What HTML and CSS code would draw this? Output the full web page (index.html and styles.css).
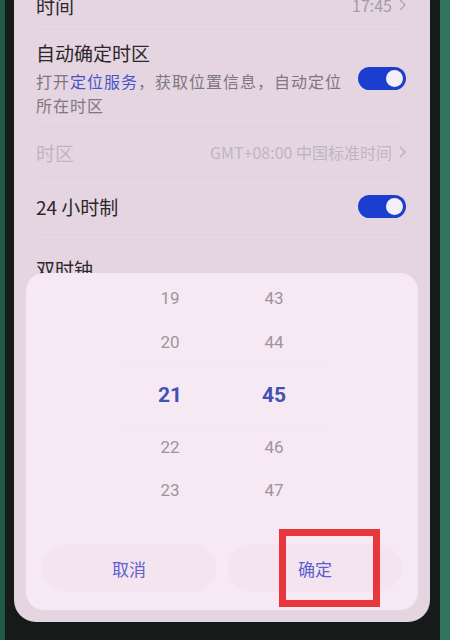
FILE: index.html
```html
<!DOCTYPE html>
<html lang="zh-CN">
<head>
  <meta charset="UTF-8">
  <meta name="viewport" content="width=device-width, initial-scale=1.0">
  <title>日期和时间</title>
  <link rel="stylesheet" href="styles.css">
</head>
<body>
  <div class="bezel">
    <div class="screen">
      <div class="settings">
        <div class="row row-first">
          <span class="label">时间</span>
          <span class="value">17:45
            <svg class="chevron" viewBox="0 0 8 14"><path d="M1 1l6 6-6 6"/></svg>
          </span>
        </div>

        <div class="row row-tall">
          <div class="text">
            <div class="label">自动确定时区</div>
            <div class="hint">打开<span class="link">定位服务</span>，获取位置信息，自动定位所在时区</div>
          </div>
          <span class="switch on"></span>
        </div>

        <div class="row disabled">
          <span class="label">时区</span>
          <span class="value">GMT+08:00 中国标准时间
            <svg class="chevron" viewBox="0 0 8 14"><path d="M1 1l6 6-6 6"/></svg>
          </span>
        </div>

        <div class="row row-mid">
          <span class="label">24 小时制</span>
          <span class="switch on"></span>
        </div>

        <div class="row row-last">
          <span class="label">双时钟</span>
        </div>
      </div>

      <!-- Time picker dialog -->
      <div class="dialog">
        <div class="picker">
          <div class="wheel">
            <div class="item">19</div>
            <div class="item">20</div>
            <div class="item selected">21</div>
            <div class="item short">22</div>
            <div class="item">23</div>
          </div>
          <div class="wheel">
            <div class="item">43</div>
            <div class="item">44</div>
            <div class="item selected">45</div>
            <div class="item short">46</div>
            <div class="item">47</div>
          </div>
        </div>
        <div class="dialog-actions">
          <button class="action">取消</button>
          <button class="action">确定</button>
        </div>
      </div>
    </div>
  </div>

  <div class="highlight"></div>
</body>
</html>
```

FILE: styles.css
```css
/* Base */
body {
  margin: 0;
  height: 640px;
  overflow: hidden;
  background: linear-gradient(90deg, #1f5a47 0%, #2f7560 100%);
  font-family: "Noto Sans CJK SC", "Noto Sans", sans-serif;
  position: relative;
}

.bezel {
  margin-left: 5px;
  width: 416px;
  height: 640px;
  padding: 0 10px 0 9px;
  background: #161a19;
}

.screen {
  position: relative;
  height: 622px;
  background: #e5d5e1;
  border-radius: 0 0 22px 22px;
  overflow: hidden;
}

/* Settings list */
.settings {
  padding: 0 24px 0 22px;
}

.row {
  display: flex;
  justify-content: space-between;
  align-items: center;
  height: 50px;
  border-bottom: 1px solid #e0d0dc;
}

.row-first {
  height: 48px;
  margin-top: -19px;
}

.row-tall {
  height: 96px;
}

.row-mid {
  height: 56px;
}

.row-last {
  height: 66px;
  border-bottom: none;
}

.label {
  font-size: 19px;
  color: #2c272b;
}

.value {
  display: flex;
  align-items: center;
  gap: 7px;
  font-size: 16px;
  color: #a49ca3;
}

.chevron {
  width: 7px;
  height: 12px;
  fill: none;
  stroke: #aaa2a9;
  stroke-width: 1.4;
}

.text .label {
  line-height: 26px;
}

.hint {
  width: 312px;
  margin-top: 3px;
  font-size: 16px;
  letter-spacing: 1px;
  line-height: 24px;
  color: #7e777d;
}

.link {
  color: #4555c8;
}

.disabled .label,
.disabled .value {
  color: #c0b5be;
}

.disabled .chevron {
  stroke: #b4aab3;
}

.switch {
  position: relative;
  width: 48px;
  height: 23px;
  border-radius: 12px;
  background: #1a3fcf;
  flex-shrink: 0;
}

.switch.on::after {
  content: "";
  position: absolute;
  right: 3px;
  top: 3px;
  width: 17px;
  height: 17px;
  border-radius: 50%;
  background: #f4eef6;
}

/* Picker dialog */
.dialog {
  position: absolute;
  left: 12px;
  top: 273px;
  width: 392px;
  height: 337px;
  border-radius: 18px;
  background: #f7e9f4;
}

.picker {
  display: flex;
  justify-content: center;
  padding-top: 3px;
}

.wheel {
  width: 104px;
}

.item {
  height: 44px;
  display: flex;
  align-items: center;
  justify-content: center;
  font-family: Roboto, "Noto Sans", sans-serif;
  font-size: 17px;
  color: #9c959b;
}

.item.selected {
  height: 62px;
  font-size: 21px;
  font-weight: 700;
  color: #4351b5;
  border-top: 1px solid #f3e4f0;
  border-bottom: 1px solid #f3e4f0;
  box-sizing: border-box;
}

.item.short {
  height: 42px;
}

.dialog-actions {
  display: grid;
  grid-template-columns: 1fr 1fr;
  gap: 12px;
  padding: 32px 16px 0;
}

.action {
  height: 48px;
  border: none;
  border-radius: 24px;
  background: #f3e4f0;
  font-family: "Noto Sans CJK SC", sans-serif;
  font-size: 17px;
  color: #5b60cc;
}

/* Red marker box drawn over the confirm button */
.highlight {
  position: absolute;
  left: 279px;
  top: 529px;
  width: 87px;
  height: 64px;
  border: 7px solid #e8363c;
}
```
